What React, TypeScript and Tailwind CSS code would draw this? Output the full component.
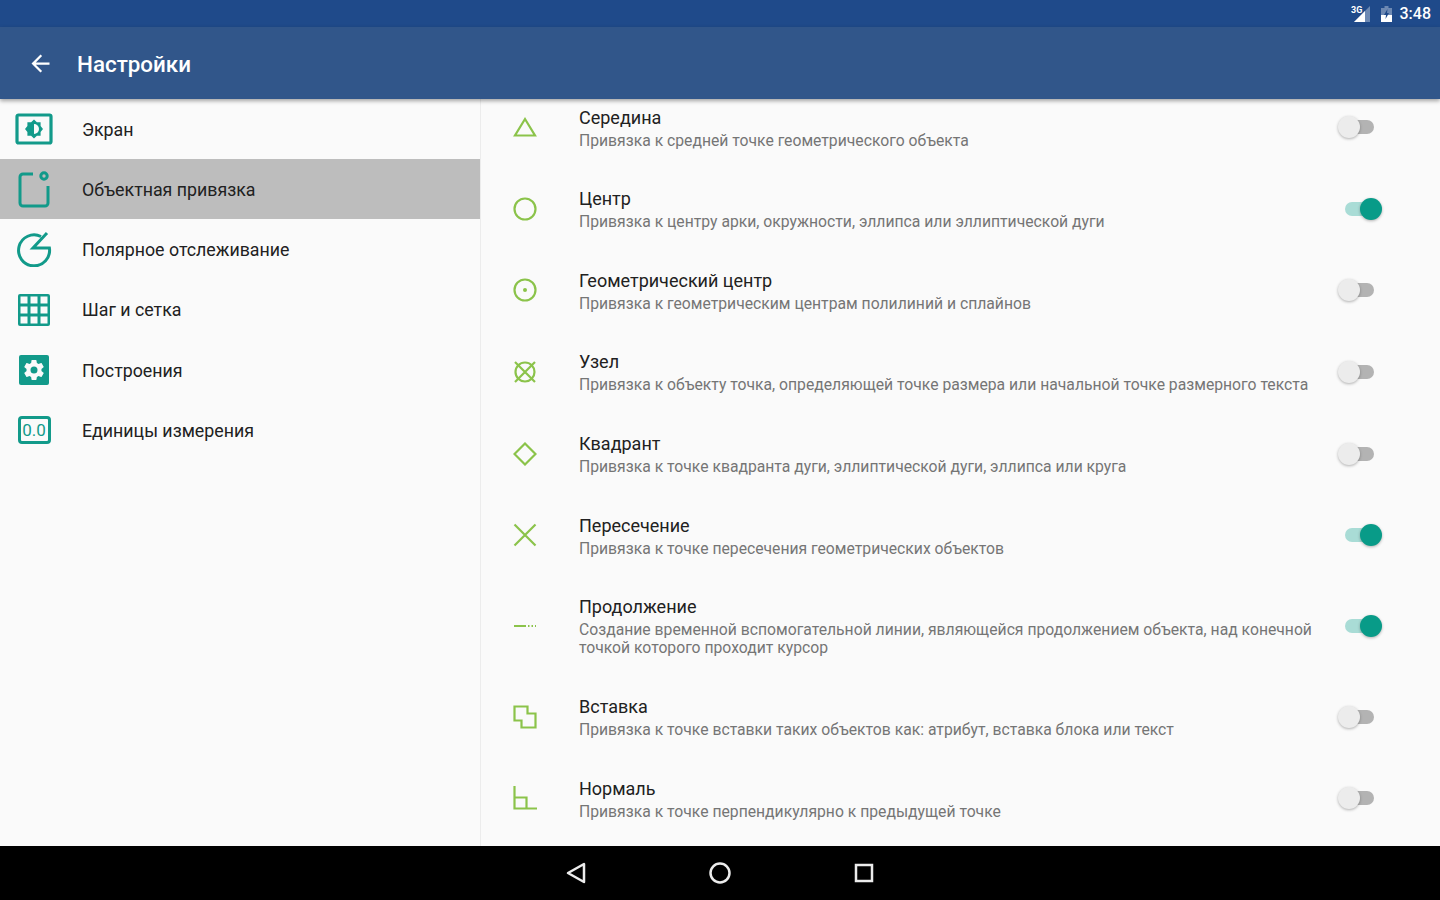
const menu = ['Экран', 'Объектная привязка', 'Полярное отслеживание', 'Шаг и сетка', 'Построения', 'Единицы измерения']

const snaps = [
    { title: 'Середина', sub: 'Привязка к средней точке геометрического объекта', on: false },
    { title: 'Центр', sub: 'Привязка к центру арки, окружности, эллипса или эллиптической дуги', on: true },
    { title: 'Геометрический центр', sub: 'Привязка к геометрическим центрам полилиний и сплайнов', on: false },
    { title: 'Узел', sub: 'Привязка к объекту точка, определяющей точке размера или начальной точке размерного текста', on: false },
    { title: 'Квадрант', sub: 'Привязка к точке квадранта дуги, эллиптической дуги, эллипса или круга', on: false },
    { title: 'Пересечение', sub: 'Привязка к точке пересечения геометрических объектов', on: true },
    { title: 'Продолжение', sub: 'Создание временной вспомогательной линии, являющейся продолжением объекта, над конечной точкой которого проходит курсор', on: true },
    { title: 'Вставка', sub: 'Привязка к точке вставки таких объектов как: атрибут, вставка блока или текст', on: false },
    { title: 'Нормаль', sub: 'Привязка к точке перпендикулярно к предыдущей точке', on: false },
]

function MenuIcon({ index }: { index: number }) {
    const c = '#129a8a'
    if (index === 0) {
        return (
            <svg width="38" height="32" viewBox="0 0 38 32" fill="none">
                <rect x="2" y="2" width="34" height="28" rx="1.5" stroke={c} strokeWidth="3.2" />
                <path d="M19 6.500l2.900 2.700h3.700v3.700L28 16l-2.400 3.100v3.700h-3.700L19 25.500l-2.900-2.700h-3.700v-3.700L10 16l2.400-3.100V9.200h3.700z" fill={c} />
                <path d="M19 11a5 5 0 0 1 0 10z" fill="#fafafa" />
            </svg>
        )
    }
    if (index === 1) {
        return (
            <svg width="34" height="38" viewBox="0 0 34 38" fill="none" stroke={c} strokeWidth="3">
                <path d="M16 4H6a3 3 0 0 0-3 3v26a3 3 0 0 0 3 3h22a3 3 0 0 0 3-3V16" />
                <circle cx="27" cy="6" r="3.200" />
            </svg>
        )
    }
    if (index === 2) {
        return (
            <svg width="36" height="36" viewBox="0 0 36 36" fill="none" stroke={c} strokeWidth="3">
                <path d="M25 5.500A15.500 15.500 0 1 0 33.400 17H17L31 2" />
            </svg>
        )
    }
    if (index === 3) {
        return (
            <svg width="34" height="34" viewBox="0 0 34 34" fill="none">
                <rect x="1" y="1" width="32" height="32" rx="2" fill={c} />
                {[3.500, 13.500, 23.500].flatMap((x) =>
                    [3.500, 13.500, 23.500].map((y) => <rect key={`${x}-${y}`} x={x} y={y} width="7" height="7" fill="#fafafa" />)
                )}
            </svg>
        )
    }
    if (index === 4) {
        return (
            <svg width="30" height="30" viewBox="0 0 30 30">
                <rect width="30" height="30" rx="2" fill={c} />
                <g transform="translate(3 3)">
                    <path
                        fill="#fafafa"
                        d="M19.430 12.980c.04-.32.07-.64.07-.98s-.03-.66-.07-.98l2.110-1.650c.19-.15.24-.42.12-.64l-2-3.460c-.12-.22-.39-.3-.61-.22l-2.490 1c-.52-.4-1.080-.73-1.690-.98l-.38-2.650A.488.488 0 0 0 14 2h-4c-.25 0-.46.18-.49.42l-.38 2.650c-.61.25-1.170.59-1.690.98l-2.490-1c-.23-.09-.49 0-.61.22l-2 3.460c-.13.22-.07.49.12.64l2.110 1.650c-.04.32-.07.650-.07.980s.03.660.07.980l-2.110 1.650c-.19.150-.24.420-.12.640l2 3.460c.12.220.39.300.61.220l2.490-1c.520.400 1.080.730 1.690.980l.38 2.650c.03.240.240.420.490.420h4c.250 0 .460-.180.490-.420l.380-2.650c.610-.250 1.170-.590 1.690-.980l2.490 1c.230.090.490 0 .610-.220l2-3.460c.120-.220.070-.490-.120-.640zM12 15.500a3.500 3.500 0 1 1 0-7 3.500 3.500 0 0 1 0 7z"
                    />
                </g>
            </svg>
        )
    }
    return (
        <div className="flex h-[28px] w-[33px] items-center justify-center rounded-[4px] border-[3px] border-[#129a8a] font-['Roboto',sans-serif] text-[17px] leading-none text-[#129a8a]">
            0.0
        </div>
    )
}

function SnapIcon({ index }: { index: number }) {
    const shapes = [
        <path key="0" d="M12 4L22 20.500H2z" />,
        <circle key="1" cx="12" cy="12" r="10.500" />,
        <g key="2">
            <circle cx="12" cy="12" r="10.500" />
            <circle cx="12" cy="12" r="2" fill="#8bc34a" stroke="none" />
        </g>,
        <g key="3">
            <circle cx="12" cy="12" r="9.500" />
            <path d="M2 2l20 20M22 2L2 22" />
        </g>,
        <path key="4" d="M12 1.500L22.500 12 12 22.500 1.500 12z" />,
        <path key="5" d="M1.500 1.500l21 21M22.500 1.500l-21 21" />,
        <path key="6" d="M1 12h12M15 12h1.500M18.500 12h1.500M22 12h1" strokeWidth="1.800" />,
        <path key="7" d="M1.500 1.500h13v7h8v14h-14v-7h-7z" />,
        <path key="8" d="M1.500 0v22.500H24M1.500 11.500h12v11" />,
    ]
    return (
        <svg width="24" height="24" viewBox="0 0 24 24" fill="none" stroke="#8bc34a" strokeWidth="2.200">
            {shapes[index]}
        </svg>
    )
}

function Toggle({ on }: { on: boolean }) {
    if (on) {
        return (
            <div className="relative ml-[7px] h-[14px] w-[34px] rounded-full bg-[#a9dcd6]">
                <div className="absolute right-[-3px] top-[-4px] h-[22px] w-[22px] rounded-full bg-[#089b88] shadow-[0_1px_3px_rgba(0,0,0,0.3)]" />
            </div>
        )
    }
    return (
        <div className="relative ml-[1px] h-[14px] w-[35px] rounded-full bg-[#b3b3b3]">
            <div className="absolute left-[-1px] top-[-4px] h-[22px] w-[22px] rounded-full bg-[#ececec] shadow-[0_1px_3px_rgba(0,0,0,0.3)]" />
        </div>
    )
}

export default function App() {
    return (
        <div className="flex h-[900px] w-[1440px] flex-col overflow-hidden bg-[#fafafa] font-['Roboto',sans-serif]">
            {/* Status bar */}
            <div className="flex h-[27px] items-center justify-end bg-[#1f4a8a] pr-[9px] text-white">
                <svg width="20" height="18" viewBox="0 0 20 18" className="mr-[10px]">
                    <path d="M19 1v16H3z" fill="#ffffff" opacity="0.35" />
                    <path d="M14 6v11H3z" fill="#ffffff" />
                    <text x="0" y="8" fill="#ffffff" fontSize="9" fontWeight="700" fontFamily="Roboto, sans-serif">3G</text>
                </svg>
                <svg width="11" height="16" viewBox="0 0 11 16" className="mr-[8px]">
                    <path d="M3.500 0h4v2H11v14H0V2h3.500z" fill="#ffffff" opacity="0.35" />
                    <path d="M0 9h11v7H0z" fill="#ffffff" />
                    <path d="M6.500 3L3 9h2l-.5 4L8 7H6z" fill="#1f4a8a" />
                </svg>
                <span className="mt-[1px] text-[16px] font-medium leading-none">3:48</span>
            </div>

            {/* App bar */}
            <div className="z-10 flex h-[72px] items-center bg-[#31568a] pl-[27px] shadow-[0_2px_4px_rgba(0,0,0,0.35)]">
                <svg width="27" height="27" viewBox="0 0 24 24" fill="#ffffff">
                    <path d="M20 11H7.830l5.590-5.590L12 4l-8 8 8 8 1.410-1.410L7.830 13H20v-2z" />
                </svg>
                <h1 className="ml-[23px] mt-[3px] text-[22.400px] font-medium text-white">Настройки</h1>
            </div>

            {/* Body */}
            <div className="flex min-h-0 flex-1">
                <div className="w-[481px] shrink-0 border-r border-[#ececec]">
                    {menu.map((item, i) => (
                        <div key={item} className={`flex h-[60.2px] items-center ${i === 1 ? 'bg-[#bdbdbd]' : ''}`}>
                            <div className="flex w-[82px] shrink-0 justify-center pr-[14px]">
                                <MenuIcon index={i} />
                            </div>
                            <span className="mt-[2px] text-[17.800px] text-[#212121]">{item}</span>
                        </div>
                    ))}
                </div>

                <div className="min-w-0 flex-1 overflow-hidden">
                    <div className="-mt-[12.600px]">
                        {snaps.map((snap, i) => (
                            <div key={snap.title} className={`flex items-center ${i === 6 ? 'h-[100px]' : 'h-[81.6px]'}`}>
                                <div className="flex w-[98px] shrink-0 justify-end pr-[42px] pl-[32px]">
                                    <SnapIcon index={i} />
                                </div>
                                <div className="mt-[1px] w-[737px] shrink-0">
                                    <div className="text-[18px] leading-[24px] text-[#212121]">{snap.title}</div>
                                    <div className="mt-[2px] text-[15.720px] leading-[18px] text-[#757575]">{snap.sub}</div>
                                </div>
                                <div className="ml-[22px]">
                                    <Toggle on={snap.on} />
                                </div>
                            </div>
                        ))}
                    </div>
                </div>
            </div>

            {/* Navigation bar */}
            <div className="flex h-[54px] items-center justify-center gap-[122px] bg-black">
                <svg width="22" height="24" viewBox="0 0 22 24" fill="none" stroke="#ececec" strokeWidth="2.500" strokeLinejoin="round">
                    <path d="M19 3v18L3 12z" />
                </svg>
                <svg width="22" height="22" viewBox="0 0 22 22" fill="none" stroke="#ececec" strokeWidth="2.500">
                    <circle cx="11" cy="11" r="9.500" />
                </svg>
                <svg width="22" height="22" viewBox="0 0 22 22" fill="none" stroke="#ececec" strokeWidth="2.500">
                    <rect x="3" y="3" width="16" height="16" />
                </svg>
            </div>
        </div>
    )
}
